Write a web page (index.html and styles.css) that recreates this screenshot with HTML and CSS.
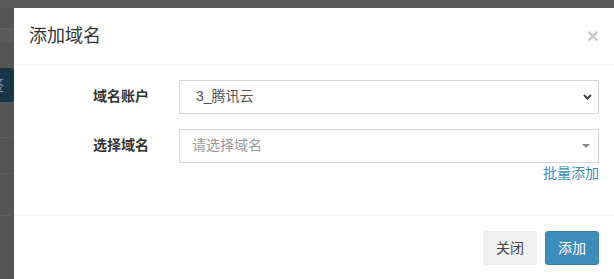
FILE: index.html
```html
<!DOCTYPE html>
<html>
<head>
    <meta charset="utf-8">
    <title>添加域名</title>
    <link rel="stylesheet" href="styles.css">
</head>
<body>
    <div class="topbar"></div>
    <div class="page">
        <!-- page behind the overlay, only its left edge shows -->
        <div class="behind">
            <div class="band"></div>
            <div class="btn-behind">签</div>
            <div class="row-line"></div>
            <div class="row-line"></div>
            <div class="row-line tall"></div>
        </div>

        <div class="modal">
            <div class="modal-header">
                <h4 class="modal-title">添加域名</h4>
                <span class="close">&times;</span>
            </div>
            <div class="modal-body">
                <div class="form-group">
                    <label class="control-label">域名账户</label>
                    <div class="field">
                        <div class="form-control select">
                            <span>3_腾讯云</span>
                            <svg width="9" height="6" viewBox="0 0 9 6"><path d="M1 1 L4.5 4.5 L8 1" fill="none" stroke="#444" stroke-width="2"/></svg>
                        </div>
                    </div>
                </div>
                <div class="form-group">
                    <label class="control-label">选择域名</label>
                    <div class="field">
                        <div class="form-control select2">
                            <span class="placeholder">请选择域名</span>
                            <svg width="8" height="4" viewBox="0 0 8 4"><path d="M0 0 L8 0 L4 4 Z" fill="#888"/></svg>
                        </div>
                        <a class="batch" href="#">批量添加</a>
                    </div>
                </div>
            </div>
            <div class="modal-footer">
                <button class="btn btn-default">关闭</button>
                <button class="btn btn-primary">添加</button>
            </div>
        </div>
    </div>
</body>
</html>
```

FILE: styles.css
```css
* {
    box-sizing: border-box;
}
body {
    margin: 0;
    background-color: #545454;
    font-family: "Liberation Sans", "Noto Sans CJK SC", sans-serif;
    font-size: 14px;
    line-height: 1.42857;
    color: #333;
    overflow: hidden;
}
.topbar {
    height: 8px;
    background-color: #595959;
}
.page {
    display: flex;
}
.behind {
    width: 14px;
    flex-shrink: 0;
    padding-top: 20px;
}
.band {
    height: 15px;
    background-color: #5b5b5b;
    border-top: 1px solid #606060;
}
.btn-behind {
    margin-top: 25px;
    height: 34px;
    background-color: #17364a;
    border-radius: 0 3px 3px 0;
    color: #8e9ba4;
    font-size: 14px;
    line-height: 34px;
    text-indent: -10px;
    overflow: hidden;
}
.row-line {
    height: 36px;
    border-bottom: 1px solid #5c5c5c;
}
.row-line.tall {
    height: 42px;
}
.modal {
    width: 600px;
    flex-shrink: 0;
    background-color: #fff;
}
.modal-header {
    display: flex;
    justify-content: space-between;
    align-items: flex-start;
    padding: 15px;
    border-bottom: 1px solid #f4f4f4;
}
.modal-title {
    margin: 0;
    font-size: 18px;
    font-weight: normal;
    line-height: 26px;
    color: #333;
}
.close {
    font-size: 21px;
    font-weight: bold;
    line-height: 1;
    color: #000;
    opacity: 0.2;
    margin-top: 2px;
}
.modal-body {
    padding: 15px 15px 16px;
}
.form-group {
    display: flex;
    margin: 0 -15px 15px;
}
.control-label {
    width: 150px;
    padding: 7px 15px 0;
    text-align: right;
    font-weight: bold;
}
.field {
    width: 450px;
    padding: 0 15px;
    display: flex;
    flex-direction: column;
}
.form-control {
    height: 34px;
    border: 1px solid #d2d6de;
    display: flex;
    align-items: center;
    justify-content: space-between;
}
.select {
    padding: 0 6px 0 16px;
    color: #555;
}
.select2 {
    padding: 0 8px 0 12px;
}
.placeholder {
    color: #999;
}
.batch {
    align-self: flex-end;
    margin-top: 1px;
    color: #3c8dbc;
    text-decoration: none;
}
.modal-footer {
    display: flex;
    justify-content: flex-end;
    gap: 8px;
    padding: 15px;
    border-top: 1px solid #f4f4f4;
}
.btn {
    height: 34px;
    padding: 6px 12px;
    font-family: inherit;
    font-size: 14px;
    line-height: 20px;
    border-radius: 3px;
    border: 1px solid transparent;
}
.btn-default {
    background-color: #f0f0f0;
    border-color: #f0f0f0;
    color: #444;
}
.btn-primary {
    background-color: #3c8dbc;
    border-color: #367fa9;
    color: #fff;
}
```
